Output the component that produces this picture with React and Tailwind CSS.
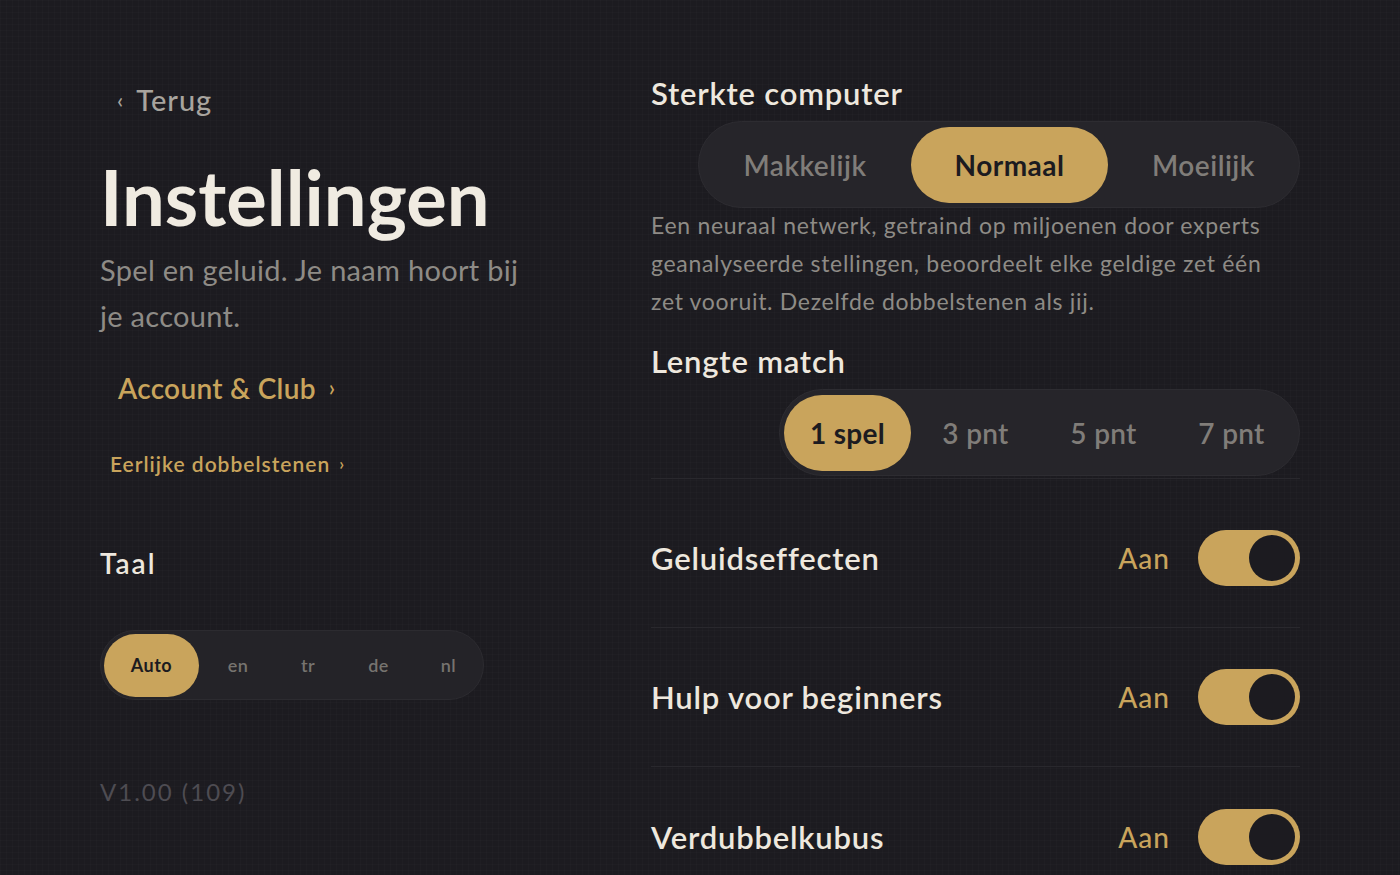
import React from "react";

const font = { fontFamily: "Lato, 'Noto Sans', sans-serif" };

function Toggle() {
  return (
    <div className="flex items-center gap-[28px]">
      <span className="text-[28px] leading-[36px] font-medium tracking-[1px] text-[#c9a45c]">Aan</span>
      <div className="w-[102px] h-[56px] rounded-full bg-[#c9a45c] p-[5px] flex justify-end">
        <div className="w-[46px] h-[46px] rounded-full bg-[#1c1b20]" />
      </div>
    </div>
  );
}

function Row({ label, last }) {
  return (
    <div className={"h-[139px] flex items-center justify-between " + (last ? "" : "border-b border-[#29282d]")}>
      <span className="text-[31px] leading-[38px] font-semibold tracking-[0.8px] text-[#eee8de]">{label}</span>
      <Toggle />
    </div>
  );
}

export default function App() {
  return (
    <div
      style={font}
      className="min-h-screen w-full bg-[#1c1b20] bg-[linear-gradient(rgba(255,255,255,0.012)_1px,transparent_1px),linear-gradient(90deg,rgba(255,255,255,0.012)_1px,transparent_1px)] bg-[size:6px_6px] flex px-[100px]"
    >
      {/* Left column */}
      <div className="w-[551px] shrink-0 flex flex-col items-start pt-[82px]">
        <div className="h-[36px] flex items-center pl-[17px] text-[29px] leading-[36px] tracking-[1px] text-[#a8a49e] font-medium">
          <span className="text-[22px] mr-[12px]">‹</span>
          <span>Terug</span>
        </div>
        <h1 className="mt-[37px] text-[76px] leading-[84px] font-bold text-[#f0ebe1]">Instellingen</h1>
        <p className="mt-[8px] w-[430px] text-[29px] leading-[46px] tracking-[0.3px] text-[#8e8b86]">
          Spel en geluid. Je naam hoort bij je account.
        </p>
        <div className="mt-[31px] pl-[18px] h-[36px] flex items-center text-[28px] leading-[36px] tracking-[0.3px] font-semibold text-[#c9a45c]">
          Account &amp; Club<span className="ml-[13px] text-[22px]">›</span>
        </div>
        <div className="mt-[44px] pl-[10px] h-[28px] flex items-center text-[21px] leading-[28px] tracking-[1px] font-semibold text-[#c9a45c]">
          Eerlijke dobbelstenen<span className="ml-[9px] text-[17px]">›</span>
        </div>
        <div className="mt-[68px] h-[34px] text-[28px] leading-[34px] tracking-[2px] font-semibold text-[#eee8de]">Taal</div>
        <div className="mt-[50px] h-[70px] w-[384px] rounded-full bg-[#242328] border border-[#2c2b30] p-[3px] flex items-center gap-[5px]">
          <div className="w-[95px] h-[63px] rounded-full bg-[#c9a45c] flex items-center justify-center text-[18px] tracking-[0.5px] font-bold text-[#1c1b20]">Auto</div>
          <div className="w-[68px] h-[63px] flex items-center justify-center text-[18px] tracking-[0.5px] font-semibold text-[#76736f]">en</div>
          <div className="w-[62px] h-[63px] flex items-center justify-center text-[18px] tracking-[0.5px] font-semibold text-[#76736f]">tr</div>
          <div className="w-[69px] h-[63px] flex items-center justify-center text-[18px] tracking-[0.5px] font-semibold text-[#76736f]">de</div>
          <div className="w-[61px] h-[63px] flex items-center justify-center text-[18px] tracking-[0.5px] font-semibold text-[#76736f]">nl</div>
        </div>
        <div className="mt-[76px] h-[32px] text-[24px] leading-[32px] tracking-[2px] text-[#4e4c52]">V1.00 (109)</div>
      </div>

      {/* Right column */}
      <div className="flex-1 flex flex-col pt-[74px]">
        <div className="h-[38px] text-[31px] leading-[38px] font-semibold tracking-[0.8px] text-[#eee8de]">Sterkte computer</div>
        <div className="mt-[9px] self-end h-[87px] rounded-full bg-[#26252a] border border-[#2d2c31] p-[4px] flex items-center gap-[4px]">
          <div className="w-[204px] h-[76px] rounded-full flex items-center justify-center text-[28px] tracking-[0.5px] font-semibold text-[#807d79]">Makkelijk</div>
          <div className="w-[197px] h-[76px] rounded-full bg-[#c9a45c] flex items-center justify-center text-[28px] tracking-[0.5px] font-bold text-[#1c1b20]">Normaal</div>
          <div className="w-[183px] h-[76px] rounded-full flex items-center justify-center text-[28px] tracking-[0.5px] font-semibold text-[#807d79]">Moeilijk</div>
        </div>
        <p className="mt-[-2px] text-[23px] leading-[38px] tracking-[0.7px] text-[#8e8b86] w-[630px]">
          Een neuraal netwerk, getraind op miljoenen door experts geanalyseerde stellingen, beoordeelt elke geldige zet één zet vooruit. Dezelfde dobbelstenen als jij.
        </p>
        <div className="mt-[22px] h-[38px] text-[31px] leading-[38px] font-semibold tracking-[0.8px] text-[#eee8de]">Lengte match</div>
        <div className="border-b border-[#29282d] pb-[2px] flex flex-col">
          <div className="mt-[9px] self-end h-[87px] rounded-full bg-[#26252a] border border-[#2d2c31] p-[4px] flex items-center gap-[1px]">
            <div className="w-[127px] h-[76px] rounded-full bg-[#c9a45c] flex items-center justify-center text-[28px] tracking-[0.3px] font-bold text-[#1c1b20]">1 spel</div>
            <div className="w-[127px] h-[76px] rounded-full flex items-center justify-center text-[28px] tracking-[0.3px] font-semibold text-[#807d79]">3 pnt</div>
            <div className="w-[127px] h-[76px] rounded-full flex items-center justify-center text-[28px] tracking-[0.3px] font-semibold text-[#807d79]">5 pnt</div>
            <div className="w-[127px] h-[76px] rounded-full flex items-center justify-center text-[28px] tracking-[0.3px] font-semibold text-[#807d79]">7 pnt</div>
          </div>
        </div>
        <div className="mt-[10px] flex flex-col">
          <Row label="Geluidseffecten" />
          <Row label="Hulp voor beginners" />
          <Row label="Verdubbelkubus" last />
        </div>
      </div>
    </div>
  );
}
